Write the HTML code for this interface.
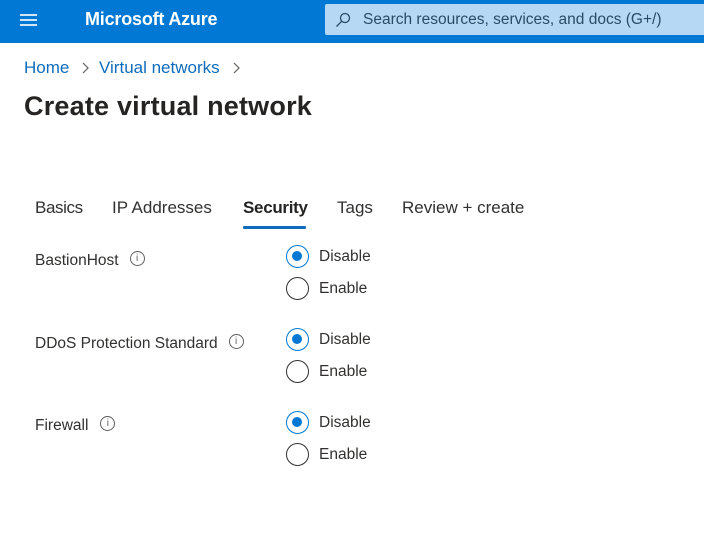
<!DOCTYPE html>
<html><head><meta charset="utf-8"><style>
*{margin:0;padding:0;box-sizing:border-box}
body{width:704px;height:536px;background:#fff;font-family:"Liberation Sans",sans-serif;position:relative;overflow:hidden;color:#323130}
.hdr{position:absolute;left:0;top:0;width:704px;height:43px;background:#0078d4}
.ham{position:absolute;left:20px;width:17px;height:2px;background:#cfe6f8}
.brand{position:absolute;left:85px;top:9px;color:#fff;font-size:18px;font-weight:bold;letter-spacing:-0.2px}
.search{position:absolute;left:325px;top:4px;width:385px;height:31px;background:#b6d8f4;border-radius:2px}
.search span{position:absolute;left:38px;top:7px;font-size:15.5px;color:#2b4a66}
.a{position:absolute;white-space:nowrap}
.crumb{top:58px;font-size:17px;color:#0f6cbd}
.title{left:24px;top:91px;font-size:27px;font-weight:bold;color:#252423;letter-spacing:0.2px}
.tab{top:198px;font-size:17px;color:#323130}
.lbl{font-size:15.5px;color:#323130}
.info{display:inline-block;width:15px;height:15px;border:1px solid #605e5c;border-radius:50%;font-size:10px;text-align:center;line-height:13px;vertical-align:middle;margin-left:11px;position:relative;top:-2px;color:#605e5c}
.r{position:absolute;left:286px;width:23px;height:23px;border-radius:50%;border:1.5px solid #323130;background:#fff}
.r.on{border-color:#0078d4}
.r.on::after{content:"";position:absolute;left:5px;top:5px;width:10px;height:10px;border-radius:50%;background:#0078d4}
.rl{left:319px;font-size:15.5px;color:#323130}
</style></head><body>
<div class="hdr">
<div class="ham" style="top:14px"></div><div class="ham" style="top:19px"></div><div class="ham" style="top:24px"></div>
<div class="brand">Microsoft Azure</div>
<div class="search">
<svg style="position:absolute;left:10px;top:8px" width="16" height="16" viewBox="0 0 16 16"><circle cx="10" cy="6" r="4.5" fill="none" stroke="#2b4a66" stroke-width="1.3"/><line x1="6.8" y1="9.2" x2="1.5" y2="14.5" stroke="#2b4a66" stroke-width="1.3"/></svg>
<span>Search resources, services, and docs (G+/)</span></div>
</div>
<div class="a crumb" style="left:24px">Home</div>
<svg class="a" style="left:81px;top:62px" width="8" height="12"><path d="M2 1l5 5-5 5" fill="none" stroke="#605e5c" stroke-width="1.2"/></svg>
<div class="a crumb" style="left:99px">Virtual networks</div>
<svg class="a" style="left:232px;top:62px" width="8" height="12"><path d="M2 1l5 5-5 5" fill="none" stroke="#605e5c" stroke-width="1.2"/></svg>
<div class="a title">Create virtual network</div>
<div class="a tab" style="left:35px;letter-spacing:-0.4px">Basics</div>
<div class="a tab" style="left:112px">IP Addresses</div>
<div class="a tab" style="left:243px;font-weight:bold;color:#252423;letter-spacing:-0.3px">Security</div>
<div class="a" style="left:243px;top:226px;width:63px;height:3px;background:#0f6cbd;border-radius:1px"></div>
<div class="a tab" style="left:337px">Tags</div>
<div class="a tab" style="left:402px">Review + create</div>

<div class="a lbl" style="left:35px;top:252px">BastionHost<span class="info">i</span></div>
<div class="r on" style="top:245px"></div><div class="a rl" style="top:248px">Disable</div>
<div class="r" style="top:277px"></div><div class="a rl" style="top:280px">Enable</div>

<div class="a lbl" style="left:35px;top:335px">DDoS Protection Standard<span class="info">i</span></div>
<div class="r on" style="top:328px"></div><div class="a rl" style="top:331px">Disable</div>
<div class="r" style="top:360px"></div><div class="a rl" style="top:363px">Enable</div>

<div class="a lbl" style="left:35px;top:417px">Firewall<span class="info" style="margin-left:12px">i</span></div>
<div class="r on" style="top:411px"></div><div class="a rl" style="top:414px">Disable</div>
<div class="r" style="top:443px"></div><div class="a rl" style="top:446px">Enable</div>
</body></html>
